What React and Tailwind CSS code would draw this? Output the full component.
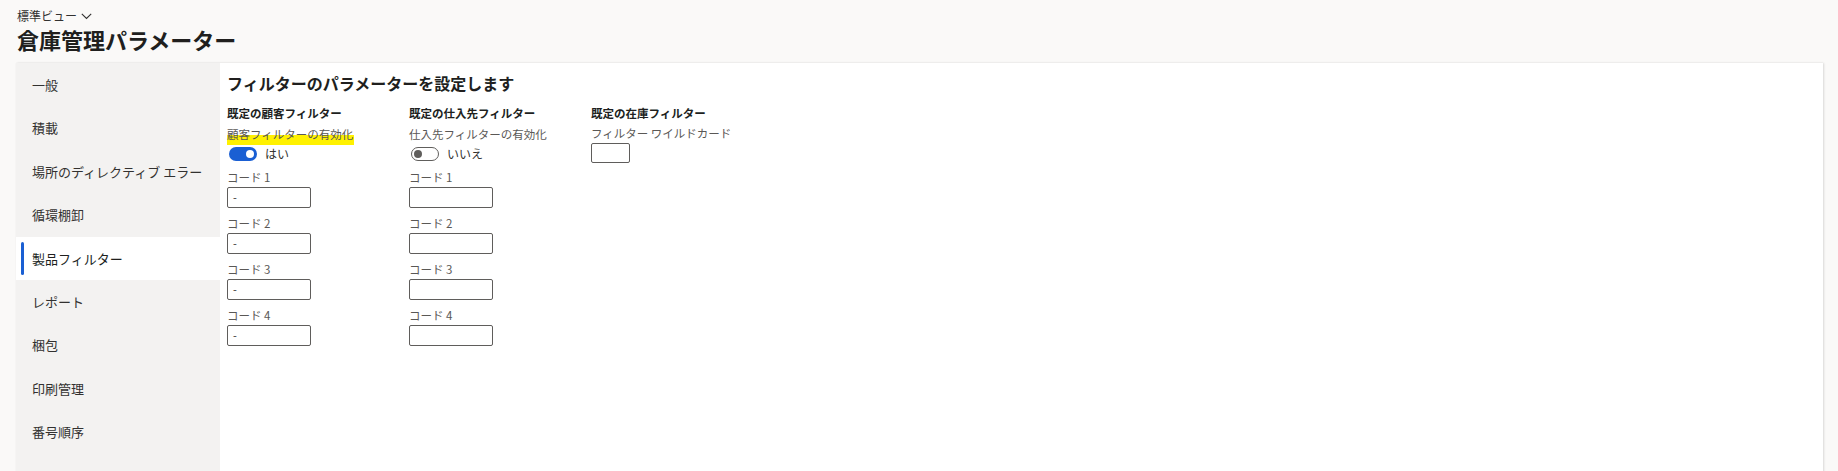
import React from "react";

const F = { fontFamily: '"Noto Sans CJK JP", "Noto Sans", sans-serif' };

const nav = ["一般", "積載", "場所のディレクティブ エラー", "循環棚卸", "製品フィルター", "レポート", "梱包", "印刷管理", "番号順序"];

function Toggle({ on }) {
  if (on) {
    return (
      <div className="w-[28px] h-[14px] rounded-full bg-[#1a5fd3] flex items-center justify-end pr-[3px]">
        <div className="w-[8px] h-[8px] rounded-full bg-white" />
      </div>
    );
  }
  return (
    <div className="w-[28px] h-[14px] rounded-full border border-[#605e5c] bg-white flex items-center pl-[2px]">
      <div className="w-[8px] h-[8px] rounded-full bg-[#605e5c]" />
    </div>
  );
}

function CodeField({ n, dash }) {
  return (
    <div className="mt-[8px]">
      <div className="h-[14px] leading-[14px] text-[11.5px] text-[#5a5856]">コード {n}</div>
      <div className="mt-[3px] w-[84px] h-[21px] border border-[#5f5d5b] rounded-[2px] bg-white flex items-center pl-[5px] text-[11px] text-[#323130] leading-none">
        {dash ? "-" : ""}
      </div>
    </div>
  );
}

function Column({ title, label, on, state, dash, highlight }) {
  return (
    <div className="w-[182px] shrink-0">
      <div className="h-[14px] leading-[14px] text-[11.5px] font-semibold text-[#201f1e]">{title}</div>
      <div className="mt-[7px] h-[14px] leading-[14px] text-[11.5px] text-[#5a5856]">
        {highlight ? (
          <span className="bg-[linear-gradient(transparent_48%,#fff100_48%)] pb-[3px] pr-[1px]">{label}</span>
        ) : (
          label
        )}
      </div>
      <div className="mt-[6px] h-[14px] flex items-center gap-[8px] pl-[2px]">
        <Toggle on={on} />
        <span className="text-[12px] text-[#323130] leading-[14px]">{state}</span>
      </div>
      <div className="mt-[9px]">
        {[1, 2, 3, 4].map((n) => (
          <CodeField key={n} n={n} dash={dash} />
        ))}
      </div>
    </div>
  );
}

export default function App() {
  return (
    <div className="w-[1838px] h-[471px] bg-[#faf9f8] overflow-hidden text-[#323130]" style={F}>
      <div className="pl-[17px] pt-[9px] h-[63px]">
        <div className="flex items-center gap-[4px] h-[14px] text-[12px] leading-[14px] text-[#323130]">
          <span>標準ビュー</span>
          <svg width="11" height="7" viewBox="0 0 11 7" fill="none">
            <path d="M0.8 0.8 L5.5 5.5 L10.2 0.8" stroke="#323130" strokeWidth="1.1" />
          </svg>
        </div>
        <div className="mt-[3px] text-[22px] font-bold leading-[26px] text-[#201f1e]">倉庫管理パラメーター</div>
      </div>
      <div className="ml-[16px] mr-[15px] h-[420px] flex bg-white shadow-[1px_0_2px_rgba(0,0,0,0.12),0_0_1px_rgba(0,0,0,0.06)]">
        <div className="w-[204px] shrink-0 bg-[#f3f2f1]">
          {nav.map((t, i) => (
            <div
              key={t}
              className={
                "h-[43.4px] flex items-center pl-[16px] text-[13px] relative " +
                (i === 4 ? "bg-white text-[#201f1e]" : "text-[#323130]")
              }
            >
              {i === 4 && <div className="absolute left-[5px] top-[5px] bottom-[5px] w-[3px] rounded-[2px] bg-[#1a5fd3]" />}
              {t}
            </div>
          ))}
        </div>
        <div className="flex-1 pl-[7px] pt-[10px]">
          <div className="h-[20px] leading-[20px] text-[16px] font-semibold text-[#201f1e]">フィルターのパラメーターを設定します</div>
          <div className="mt-[13px] flex">
            <Column title="既定の顧客フィルター" label="顧客フィルターの有効化" on state="はい" dash highlight />
            <Column title="既定の仕入先フィルター" label="仕入先フィルターの有効化" on={false} state="いいえ" />
            <div>
              <div className="h-[14px] leading-[14px] text-[11.5px] font-semibold text-[#201f1e]">既定の在庫フィルター</div>
              <div className="mt-[6px] h-[14px] leading-[14px] text-[11.5px] text-[#5a5856]">フィルター ワイルドカード</div>
              <div className="mt-[3px] w-[39px] h-[20px] border border-[#5f5d5b] rounded-[2px] bg-white" />
            </div>
          </div>
        </div>
      </div>
    </div>
  );
}
